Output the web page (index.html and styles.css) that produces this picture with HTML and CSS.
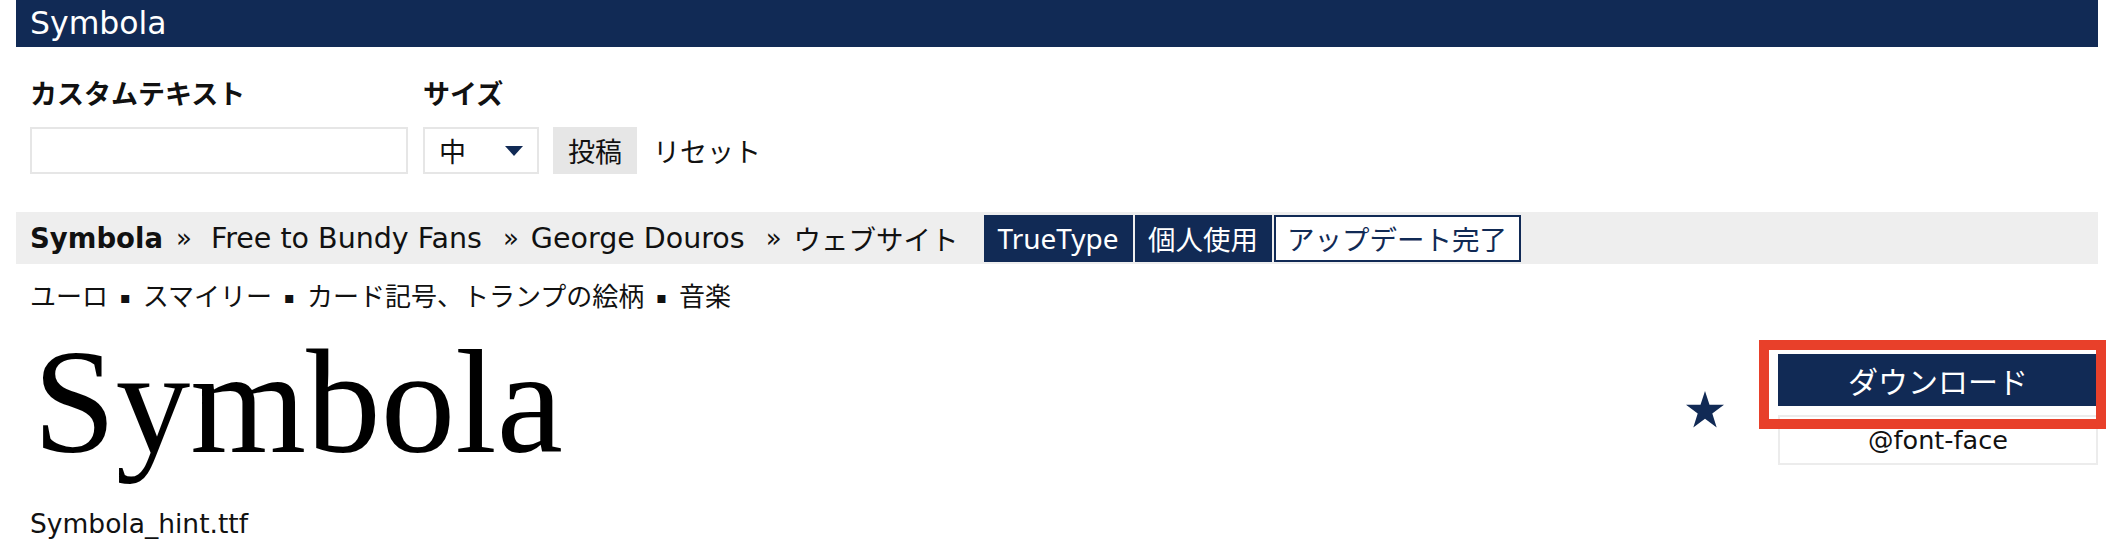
FILE: index.html
```html
<!DOCTYPE html>
<html lang="ja">
<head>
<meta charset="utf-8">
<title>Symbola</title>
<link rel="stylesheet" href="styles.css">
</head>
<body>
<div class="page">
  <header class="title-bar">Symbola</header>

  <form class="custom-form">
    <div class="field field-text">
      <label class="field-label" for="custom">カスタムテキスト</label>
      <input class="text-input" id="custom" type="text">
    </div>
    <div class="field">
      <span class="field-label">サイズ</span>
      <div class="controls">
        <div class="select">
          <span class="select-value">中</span>
          <svg class="select-arrow" width="18" height="10" viewBox="0 0 18 10"><polygon points="0,0 18,0 9,10" fill="#112a55"/></svg>
        </div>
        <button class="post-btn" type="button">投稿</button>
        <span class="reset">リセット</span>
      </div>
    </div>
  </form>

  <nav class="crumbs">
    <strong class="crumb-main">Symbola</strong>
    <span class="sep sep-first">»</span>
    <span class="crumb">Free to Bundy Fans</span>
    <span class="sep">»</span>
    <span class="crumb">George Douros</span>
    <span class="sep">»</span>
    <span class="crumb ja">ウェブサイト</span>
    <span class="tags">
      <span class="tag tag-fill">TrueType</span>
      <span class="tag tag-fill ja">個人使用</span>
      <span class="tag tag-outline ja">アップデート完了</span>
    </span>
  </nav>

  <p class="desc">ユーロ<span class="dot">▪</span>スマイリー<span class="dot">▪</span>カード記号、トランプの絵柄<span class="dot">▪</span>音楽</p>

  <div class="sample-row">
    <div class="sample">Symbola</div>
    <div class="actions">
      <svg class="star" width="38" height="38" viewBox="0 0 38 38"><polygon fill="#112a55" points="19,0 23.5,13.8 38,13.8 26.3,22.4 30.7,36.5 19,27.8 7.3,36.5 11.7,22.4 0,13.8 14.5,13.8"/></svg>
      <div class="dl-col">
        <a class="dl-btn" href="#">ダウンロード</a>
        <a class="ff-btn" href="#">@font-face</a>
        <div class="highlight"></div>
      </div>
    </div>
  </div>

  <p class="filename">Symbola_hint.ttf</p>
</div>
</body>
</html>
```

FILE: styles.css
```css
* { box-sizing: border-box; }

html, body {
  margin: 0;
  padding: 0;
  background: #fff;
}

body {
  font-family: "DejaVu Sans", "Noto Sans CJK JP", sans-serif;
  color: #111;
}

.page {
  width: 2082px;
  margin-left: 16px;
}

.title-bar {
  height: 47px;
  background: #112a55;
  color: #fff;
  font-size: 31.5px;
  line-height: 47px;
  padding-left: 14px;
}

.custom-form {
  display: flex;
  gap: 15px;
  padding-left: 14px;
  margin-top: 28px;
}

.field {
  display: flex;
  flex-direction: column;
  gap: 16px;
}

.field-label {
  font-family: "Noto Sans CJK JP", sans-serif;
  font-weight: 700;
  font-size: 27px;
  line-height: 36px;
  height: 36px;
}

.text-input {
  width: 378px;
  height: 47px;
  border: 2px solid #e6e6e6;
  background: #fff;
  margin: 0;
  padding: 0 10px;
  font-size: 27px;
  outline: none;
}

.controls {
  display: flex;
  align-items: center;
  height: 47px;
}

.select {
  width: 116px;
  height: 47px;
  border: 2px solid #e6e6e6;
  display: flex;
  align-items: center;
  justify-content: space-between;
  padding: 0 14px 0 14px;
  font-family: "Noto Sans CJK JP", sans-serif;
  font-size: 27px;
}

.select-arrow { display: block; }

.post-btn {
  margin-left: 14px;
  width: 84px;
  height: 47px;
  border: 0;
  background: #e6e6e6;
  color: #111;
  font-family: "Noto Sans CJK JP", sans-serif;
  font-size: 27px;
  padding: 0;
}

.reset {
  margin-left: 16px;
  font-family: "Noto Sans CJK JP", sans-serif;
  font-size: 27px;
}

.crumbs {
  margin-top: 38px;
  height: 52px;
  background: #eeeeee;
  display: flex;
  align-items: center;
  padding: 0 0 0 14px;
  font-size: 28.5px;
  white-space: nowrap;
}

.ja {
  font-family: "Noto Sans CJK JP", sans-serif;
  font-size: 27.5px;
}

.crumb-main { font-weight: 700; font-size: 27.5px; }

.sep {
  margin: 0 12px 0 21px;
  font-size: 26px;
}

.sep.sep-first {
  margin: 0 19px 0 13px;
}

.tags {
  display: flex;
  gap: 2px;
  margin-left: 25px;
}

.tag {
  height: 47px;
  line-height: 47px;
  padding: 0 12px;
}

.tag-fill {
  background: #112a55;
  color: #fff;
}

.tag:first-child {
  font-family: "Noto Sans", sans-serif;
  font-size: 28px;
  padding: 0 13px;
  width: 149px;
  text-align: center;
}

.tag-fill.ja { width: 137px; text-align: center; padding: 0; }

.tag-outline {
  background: #fff;
  color: #112a55;
  border: 2px solid #112a55;
  line-height: 43px;
  width: 247px;
  text-align: center;
  padding: 0;
}

.desc {
  margin: 13px 0 0 0;
  padding-left: 14px;
  font-family: "Noto Sans CJK JP", sans-serif;
  font-size: 26px;
  line-height: 36px;
}

.dot {
  font-family: "DejaVu Sans", sans-serif;
  font-size: 16px;
  margin: 0 12px;
  position: relative;
  top: -3px;
}

.sample-row {
  display: flex;
  justify-content: space-between;
  align-items: flex-start;
  padding-left: 14px;
}

.sample {
  font-family: "Liberation Serif", serif;
  font-size: 149px;
  line-height: 165px;
  color: #000;
  padding-left: 3px;
}

.actions {
  display: flex;
  align-items: center;
  gap: 54px;
  margin-top: 35px;
}

.star { display: block; }

.dl-col {
  position: relative;
  width: 320px;
  display: flex;
  flex-direction: column;
  gap: 9px;
}

.dl-btn {
  display: block;
  height: 52px;
  line-height: 52px;
  background: #112a55;
  color: #fff;
  text-align: center;
  text-decoration: none;
  font-family: "Noto Sans CJK JP", sans-serif;
  font-size: 30px;
}

.ff-btn {
  display: block;
  height: 50px;
  line-height: 46px;
  border: 2px solid #ececec;
  color: #111;
  text-align: center;
  text-decoration: none;
  font-size: 25.5px;
}

.highlight {
  position: absolute;
  left: -19px;
  top: -14px;
  width: 347px;
  height: 89px;
  border: 10px solid #e8402a;
  pointer-events: none;
}

.filename {
  margin: 22px 0 0 0;
  padding-left: 14px;
  font-size: 26.5px;
  line-height: 36px;
}
```
